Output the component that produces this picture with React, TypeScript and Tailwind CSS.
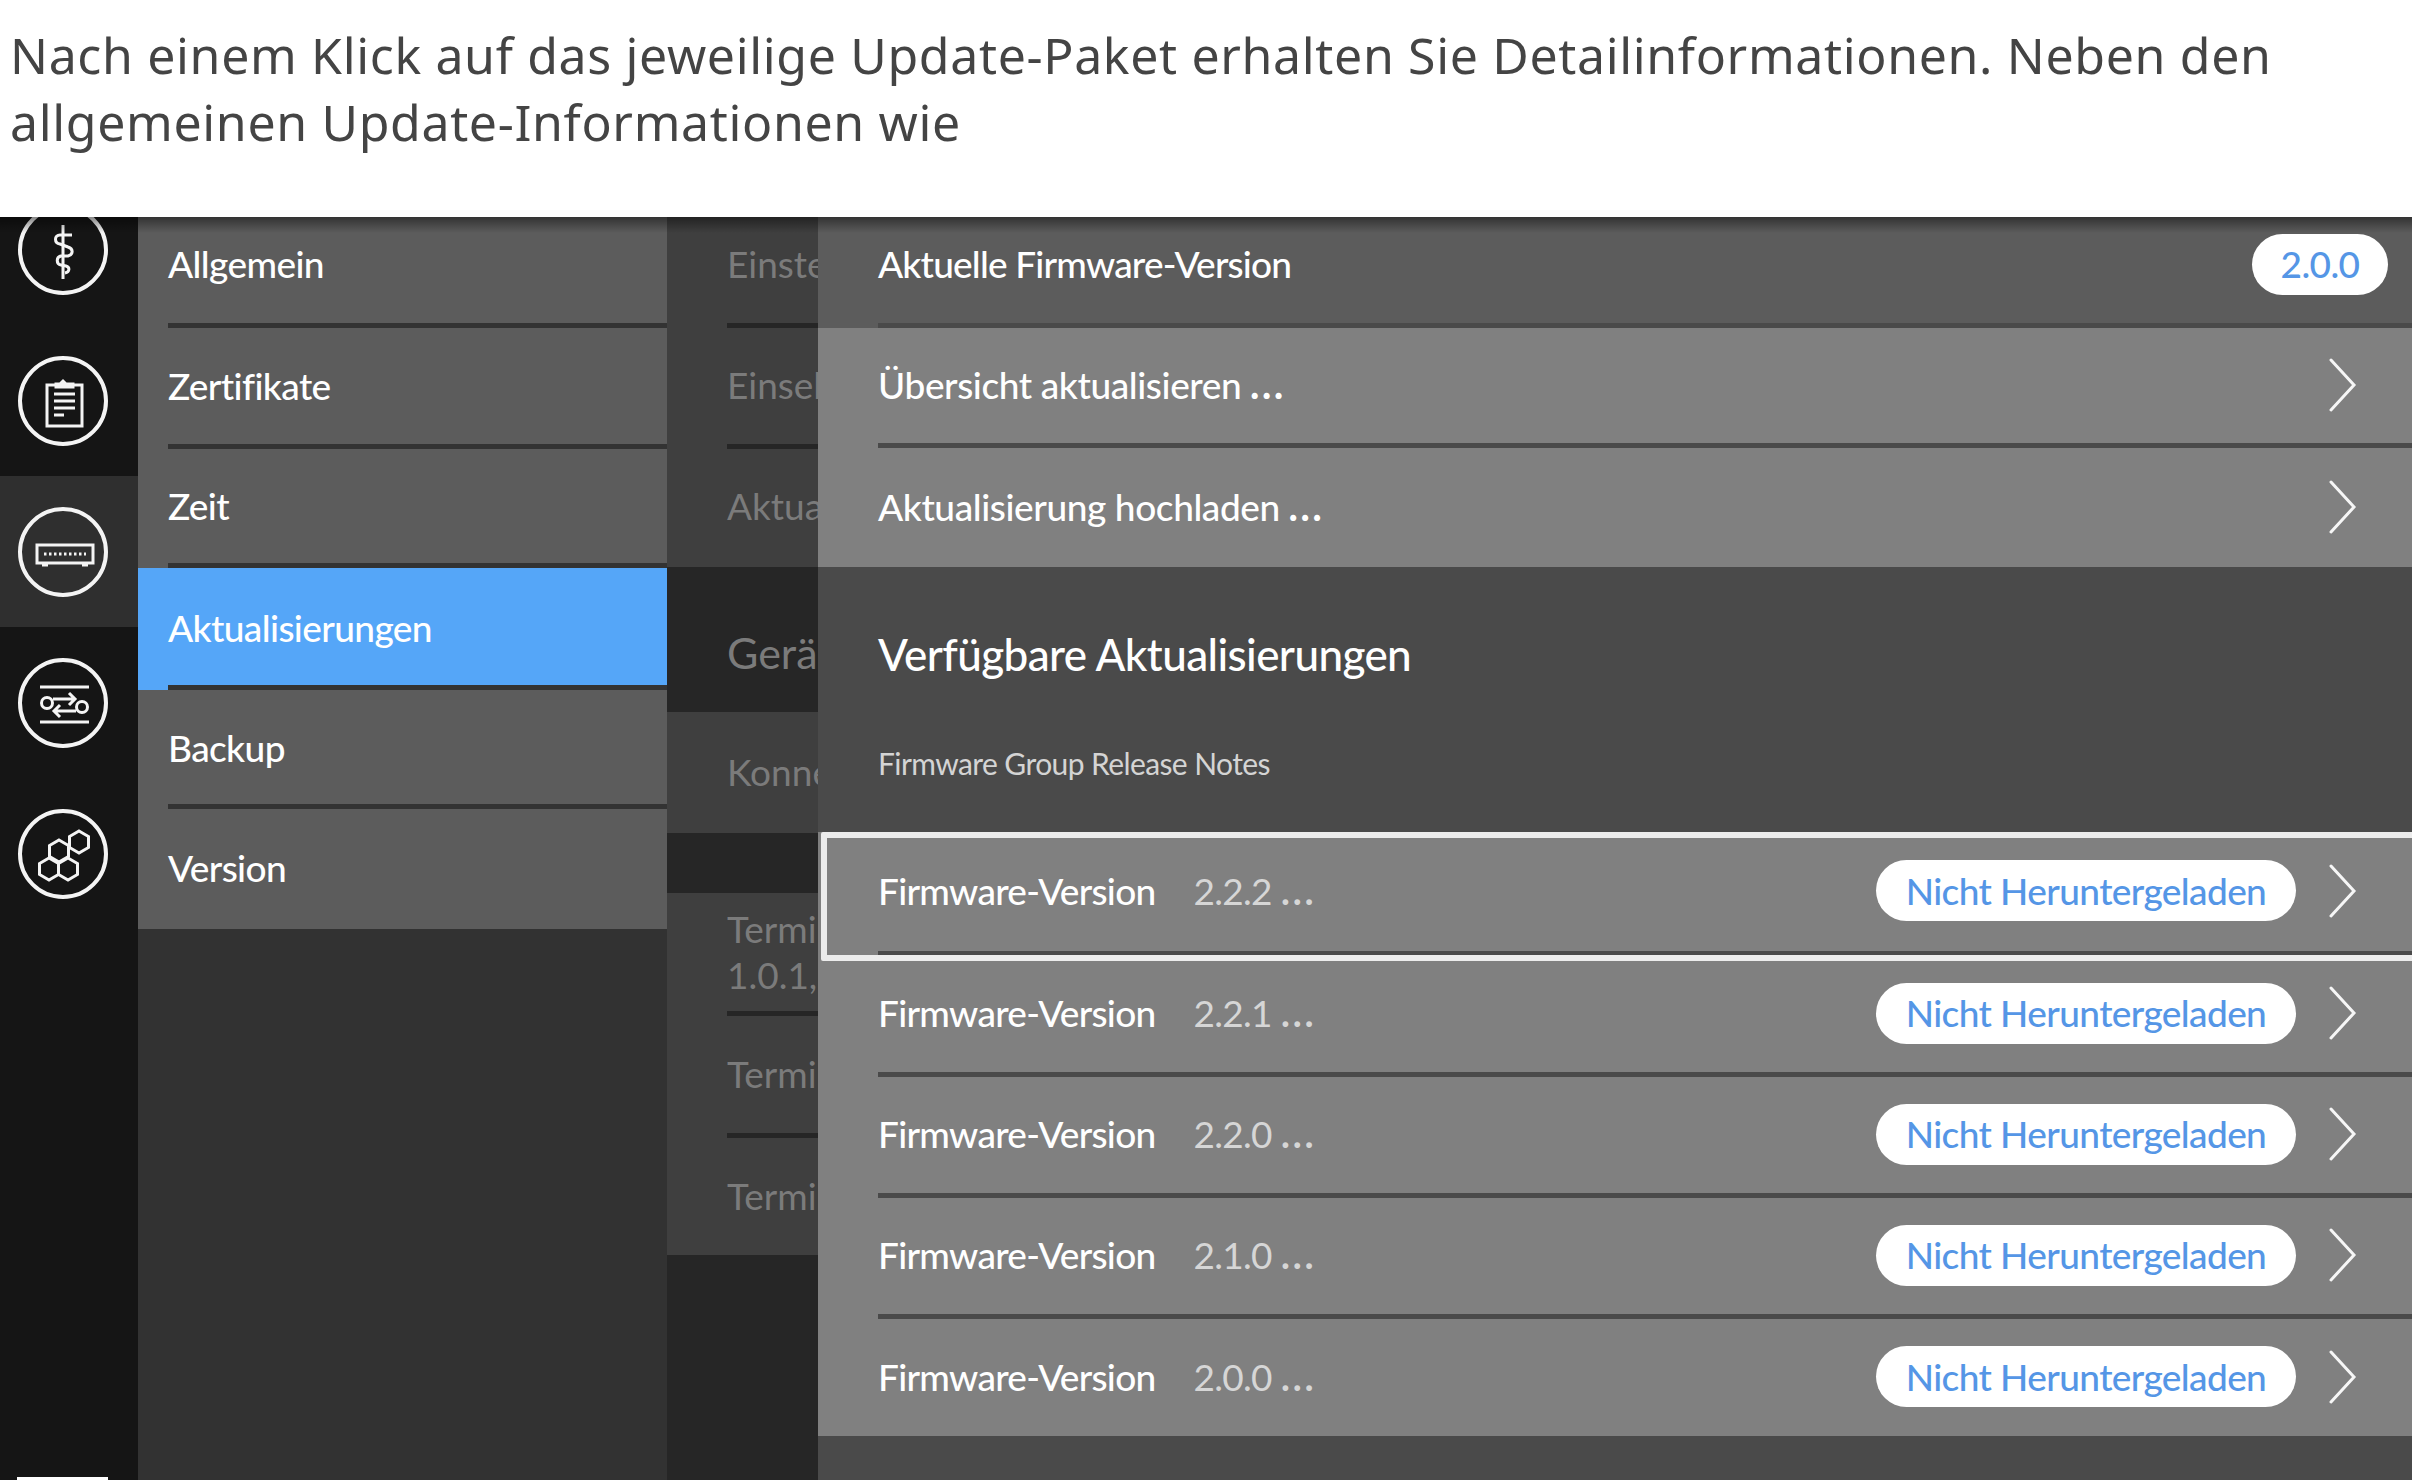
import React from "react";

const ui = "font-['Lato','Noto_Sans',sans-serif]";

function Circle({ children }: { children: React.ReactNode }) {
  return (
    <svg width="90" height="90" viewBox="0 0 90 90" fill="none" stroke="#f4f4f4" strokeWidth="3">
      <circle cx="45" cy="45" r="43" strokeWidth="4" />
      {children}
    </svg>
  );
}

const Hex = ({ x, y }: { x: number; y: number }) => (
  <polygon
    points={`${x},${y - 11} ${x + 9.5},${y - 5.5} ${x + 9.5},${y + 5.5} ${x},${y + 11} ${x - 9.5},${y + 5.5} ${x - 9.5},${y - 5.5}`}
  />
);

const icons = [
  <Circle>
    <path d="M45 20V74" />
    <path d="M54 30H42C36 30 36 38 42 39L50 42C56 44 55 50 50 51H43C38 52 38 59 43 60L48 61C52 62 52 67 47 68" />
  </Circle>,
  <Circle>
    <path d="M38 29H29V70H64V29H55" />
    <path d="M38 31V28H42L45 25L48 28H55V31Z" fill="#f4f4f4" />
    <path d="M36 38H57M36 45H57M36 52H57M36 59H46" />
  </Circle>,
  <Circle>
    <rect x="19" y="38" width="56" height="18" />
    <path d="M26 47H68" strokeDasharray="2.5 2.5" />
    <path d="M24 58H30M64 58H70" />
  </Circle>,
  <Circle>
    <path d="M22 29H71M22 64H71" />
    <circle cx="29" cy="45" r="5.5" />
    <circle cx="64" cy="49" r="5.5" />
    <path d="M35 41H57M51 35L57 41L51 47" />
    <path d="M58 53H36M42 47L36 53L42 59" />
  </Circle>,
  <Circle>
    <Hex x={41} y={42} />
    <Hex x={31} y={60} />
    <Hex x={50} y={60} />
    <Hex x={61} y={33} />
  </Circle>,
];

function Sidebar() {
  return (
    <div className="w-[138px] shrink-0 -mt-[43px] bg-[#151515] flex flex-col">
      {icons.map((icon, i) => (
        <div
          key={i}
          className={`h-[151px] flex items-center pl-[18px] ${i === 2 ? "bg-[#2f2f2f]" : ""}`}
        >
          {icon}
        </div>
      ))}
    </div>
  );
}

const menu = [
  { label: "Allgemein", h: "h-[111px]", pad: "pb-[12px]" },
  { label: "Zertifikate", h: "h-[121px]", pad: "" },
  { label: "Zeit", h: "h-[119px]", pad: "" },
  { label: "Aktualisierungen", h: "h-[122px]", pad: "pt-[2px]", active: true },
  { label: "Backup", h: "h-[119px]", pad: "pt-[2px]" },
  { label: "Version", h: "h-[120px]", pad: "pb-[2px]", last: true },
];

function Menu() {
  return (
    <div className="w-[529px] shrink-0 bg-[#323232] flex flex-col">
      {menu.map((m) => (
        <div
          key={m.label}
          className={`${m.h} flex flex-col text-white text-[37px] font-medium tracking-[-0.6px] ${m.active ? "bg-[#55a6f8]" : "bg-[#5c5c5c]"}`}
        >
          <div className={`flex-1 flex items-center pl-[30px] ${m.pad}`}>{m.label}</div>
          {!m.last && <div className="ml-[30px] h-[5px] bg-[#333333]" />}
        </div>
      ))}
    </div>
  );
}

function Dim({
  children,
  h,
  sep,
  pad = "",
}: {
  children: React.ReactNode;
  h: string;
  sep?: boolean;
  pad?: string;
}) {
  return (
    <div className={`${h} flex flex-col`}>
      <div className={`flex-1 flex flex-col justify-center pl-[60px] text-[#7b7b7b] text-[37px] leading-[46px] whitespace-nowrap ${pad}`}>
        {children}
      </div>
      {sep && <div className="ml-[60px] h-[5px] bg-[#262626]" />}
    </div>
  );
}

function Middle() {
  return (
    <div className="w-[151px] shrink-0 overflow-hidden bg-[#262626] flex flex-col">
      <div className="bg-[#3f3f3f]">
        <Dim h="h-[111px]" sep pad="pb-[12px]">Einste</Dim>
        <Dim h="h-[121px]" sep pad="pb-[3px]">Einsel</Dim>
        <Dim h="h-[118px]" pad="pb-[4px]">Aktua</Dim>
      </div>
      <div className="h-[145px] flex items-center pl-[60px] pt-[28px] text-[#7b7b7b] text-[43px] whitespace-nowrap">Gerä</div>
      <div className="bg-[#3f3f3f]">
        <Dim h="h-[121px]" pad="pb-[2px]">Konne</Dim>
      </div>
      <div className="h-[60px]" />
      <div className="bg-[#3f3f3f]">
        <Dim h="h-[123px]" sep>
          <span>Termi</span>
          <span>1.0.1,</span>
        </Dim>
        <Dim h="h-[122px]" sep pad="pb-[2px]">Termi</Dim>
        <Dim h="h-[117px]" pad="pb-[2px]">Termi</Dim>
      </div>
    </div>
  );
}

function Chevron() {
  return (
    <svg width="28" height="54" viewBox="0 0 28 54" fill="none" stroke="#f6f6f6" strokeWidth="3" strokeLinecap="round" className="shrink-0">
      <path d="M2 2L25 27L2 52" />
    </svg>
  );
}

function Pill({ children, w }: { children: React.ReactNode; w: string }) {
  return (
    <div className={`${w} h-[61px] shrink-0 rounded-full bg-white text-[#5596e6] text-[37px] tracking-[-0.6px] flex items-center justify-center`}>
      {children}
    </div>
  );
}

function Dots() {
  return <span className="ml-[8px] text-[46px] leading-none">…</span>;
}

function Row({
  h,
  bg,
  sep,
  pad = "pb-[2px] pr-[55px]",
  children,
}: {
  h: string;
  bg: string;
  sep?: boolean;
  pad?: string;
  children: React.ReactNode;
}) {
  return (
    <div className={`${h} ${bg} flex flex-col`}>
      <div className={`flex-1 flex items-center pl-[60px] text-white text-[37px] font-medium tracking-[-0.7px] ${pad}`}>
        {children}
      </div>
      {sep && <div className="ml-[60px] h-[5px] bg-[#4a4a4a]" />}
    </div>
  );
}

function Firmware({ v, h, sep }: { v: string; h: string; sep?: boolean }) {
  return (
    <Row h={h} bg="bg-[#808080]" sep={sep}>
      <span>Firmware-Version</span>
      <span className="ml-[38px] text-[#d6d6d6] font-normal">
        {v}
        <Dots />
      </span>
      <span className="flex-1" />
      <Pill w="w-[420px]">Nicht Heruntergeladen</Pill>
      <span className="w-[33px]" />
      <Chevron />
    </Row>
  );
}

function Panel() {
  return (
    <div className="flex-1 bg-[#4a4a4a] flex flex-col">
      <Row h="h-[111px]" bg="bg-[#5c5c5c]" sep pad="pb-[12px] pr-[24px]">
        <span className="flex-1 tracking-[-0.8px]">Aktuelle Firmware-Version</span>
        <Pill w="w-[136px]">2.0.0</Pill>
      </Row>
      <Row h="h-[120px]" bg="bg-[#808080]" sep>
        <span className="flex-1 tracking-[-0.4px]">
          Übersicht aktualisieren
          <Dots />
        </span>
        <Chevron />
      </Row>
      <Row h="h-[119px]" bg="bg-[#808080]">
        <span className="flex-1 tracking-[-0.4px]">
          Aktualisierung hochladen
          <Dots />
        </span>
        <Chevron />
      </Row>
      <div className="h-[265px] flex flex-col pl-[60px] text-white">
        <div className="h-[174px] flex items-center text-[44px] font-medium tracking-[-0.6px]">Verfügbare Aktualisierungen</div>
        <div className="text-[30px] tracking-[-0.6px] text-[#d4d4d4]">Firmware Group Release Notes</div>
      </div>
      <div className="relative">
        <Firmware v="2.2.2" h="h-[124px]" sep />
        <div className="absolute left-[3px] -right-[10px] top-0 h-[129px] border-[6px] border-[#ececec] rounded-[2px]" />
        <Firmware v="2.2.1" h="h-[121px]" sep />
        <Firmware v="2.2.0" h="h-[121px]" sep />
        <Firmware v="2.1.0" h="h-[121px]" sep />
        <Firmware v="2.0.0" h="h-[117px]" />
      </div>
    </div>
  );
}

export default function App() {
  return (
    <div className="w-[2412px] h-[1480px] overflow-hidden bg-white">
      <div className="h-[217px] pl-[10px] pt-[22px] font-['Noto_Sans',sans-serif] text-[50px] leading-[67px] text-[#444444] tracking-[0.65px]">
        <p>Nach einem Klick auf das jeweilige Update-Paket erhalten Sie Detailinformationen. Neben den</p>
        <p>allgemeinen Update-Informationen wie</p>
      </div>
      <div className={`relative h-[1263px] overflow-hidden flex ${ui}`}>
        <Sidebar />
        <Menu />
        <Middle />
        <Panel />
        <div className="absolute left-0 right-0 top-0 h-[16px] bg-gradient-to-b from-black/45 to-transparent" />
        <div className="absolute left-[17px] bottom-0 w-[91px] h-[3px] bg-white" />
      </div>
    </div>
  );
}
